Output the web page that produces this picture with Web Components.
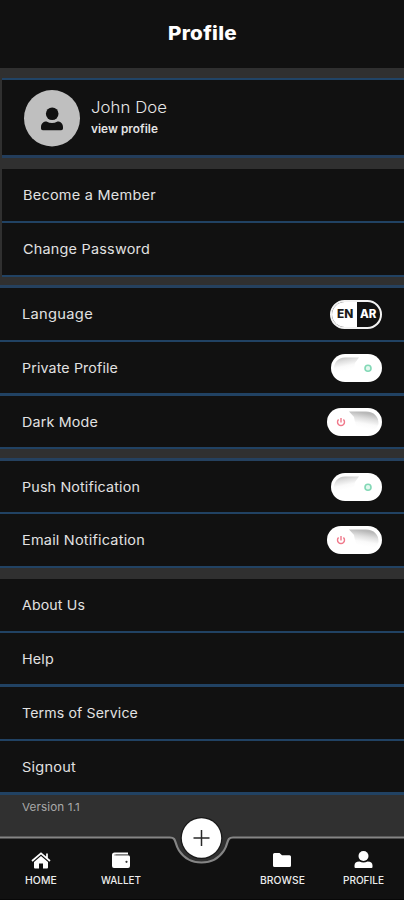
<!DOCTYPE html>
<html lang="en"><head><meta charset="utf-8"><title>Profile</title>
<style>html,body{margin:0;background:#303030}</style></head>
<body>
<profile-screen></profile-screen>
<script>
const define = (name, html, ready) => customElements.define(name, class extends HTMLElement {
  connectedCallback() {
    if (this.shadowRoot) return;
    this.attachShadow({ mode: 'open' }).innerHTML = html(this);
    if (ready) ready(this);
  }
});

// Text whose glyphs are widened so that its line has the width given in "w".
define('fit-text', () => `<style>:host{display:block;white-space:nowrap}span{display:inline-block;transform-origin:0 50%}</style><span><slot></slot></span>`, el => {
  const s = el.shadowRoot.querySelector('span');
  const n = el.textContent.length;
  const w = +el.getAttribute('w');
  const natural = s.getBoundingClientRect().width;
  const spacing = (w - natural) / n * 0.25;
  s.style.letterSpacing = spacing + 'px';
  s.style.transform = `scaleX(${w / (natural + spacing * n)})`;
  el.style.width = w + 'px';
});

define('app-header', () => `<style>
:host{display:flex;height:68px;box-sizing:border-box;align-items:center;justify-content:center;background:#111;color:#fff;font-size:19px;font-weight:800;line-height:24px;padding-left:1px}
</style><slot></slot>`);

define('user-card', () => `<style>
:host{display:flex;box-sizing:border-box;height:80px;margin:10px 0 0 2px;border-top:2px solid #214466;border-bottom:3px solid #233d5b;background:#111;padding:10px 0 0 22px;gap:11px}
svg{display:block;flex:none}
div{padding-top:6px}
.n{font-size:16.5px;line-height:22px;font-weight:300;color:#e6e6e6}
.v{font-size:11.5px;line-height:16px;font-weight:600;color:#e4e4e4;margin-top:3px}
</style><svg width="56" height="57" viewBox="0 0 56 57"><ellipse cx="28" cy="28.3" rx="28" ry="28.2" fill="#bfbfbf"/><circle cx="28.200" cy="23.700" r="6.300" fill="#111"/><path d="M17 38.500V37C17 33.500 19.500 31.500 22.500 31.500Q28 34.500 33.500 31.500C36.500 31.500 39 33.500 39 37V38.500Q39 40.300 37.200 40.300H18.800Q17 40.300 17 38.500Z" fill="#111"/></svg>
<div><fit-text class="n" w="76">John Doe</fit-text><fit-text class="v" w="67">view profile</fit-text></div>`);

define('row-group', () => `<style>:host{display:block;box-sizing:border-box;background:#111;margin-left:var(--inset,0)}</style><slot></slot>`);

define('list-row', el => `<style>
:host{display:flex;box-sizing:content-box;align-items:center;justify-content:space-between;padding:0 22px 0 var(--x,22px);border-bottom:2px solid #214263;color:#e2e2e2;font-size:13.3px;line-height:20px}
</style><fit-text w="${el.getAttribute('w')}">${el.getAttribute('label')}</fit-text><slot></slot>`);

define('language-switch', () => `<style>
:host{display:flex;box-sizing:border-box;width:52px;height:29px;border:2px solid #f2f2f2;border-radius:15px;overflow:hidden;font-size:11.5px;font-weight:800;line-height:25px;background:#111;color:#fff}
b{font-weight:800;background:#fff;color:#1b1b1b;padding-left:5px;width:20px}
i{font-style:normal;padding-left:3px}
</style><b><fit-text w="16.500">EN</fit-text></b><i><fit-text w="16.500">AR</fit-text></i>`);

define('power-toggle', el => el.hasAttribute('on') ? `<style>:host,svg{display:block}</style>
<svg width="51" height="28" viewBox="0 0 51 28"><defs><linearGradient id="g" x1="0" y1="0" x2="0.25" y2="1"><stop stop-color="#b8b8b8"/><stop offset=".25" stop-color="#dedede"/><stop offset=".5" stop-color="#fafafa"/><stop offset=".7" stop-color="#fff"/></linearGradient></defs><rect width="51" height="28" rx="14" fill="#fff"/><path d="M3 17C2 9 7 3.500 14 3.500H28L24 9Q22 24 13 24Q4 24 3 17Z" fill="url(#g)"/><circle cx="37" cy="14.300" r="3" fill="#e3f8ef" stroke="#83d8b6" stroke-width="1.600"/></svg>`
: `<style>:host,svg{display:block}</style>
<svg width="55" height="28" viewBox="0 0 55 28"><defs><linearGradient id="g" x1="0.250" y1="0" x2="0" y2="1"><stop stop-color="#b8b8b8"/><stop offset=".25" stop-color="#dedede"/><stop offset=".5" stop-color="#fafafa"/><stop offset=".7" stop-color="#fff"/></linearGradient></defs><rect width="55" height="28" rx="14" fill="#fff"/><path d="M22 3.500H39C47 3.500 52 9 51.500 16Q49 24 40 24Q29 24 27 9Z" fill="url(#g)"/><path d="M11.600 11.500A3.500 3.500 0 1 0 16.400 11.500M14 10V14.500" fill="none" stroke="#f0788a" stroke-width="1.400"/></svg>`);

define('nav-item', () => `<style>
:host{display:flex;flex-direction:column;align-items:center;color:#ededed;font-size:10px;font-weight:500;line-height:12px;gap:4px}
</style><slot name="icon"></slot><slot></slot>`);

define('tab-bar', () => `<style>
:host{display:block;position:relative;height:81px}
.bg{display:block;position:absolute;inset:0;overflow:visible}
nav{position:relative;display:grid;grid-template-columns:82px 78px 82px 80px 82px;padding-top:31px}
svg{display:block}
</style>
<svg class="bg" width="404" height="81" viewBox="0 0 404 81"><path d="M-3 18.500H170C177 18.500 174 24 179 31.500C184.500 40 193 43.500 201.500 43.500C210 43.500 218.500 40 224 31.500C229 24 226 18.500 233 18.500H408V90H-3Z" fill="#111" stroke="#858585" stroke-width="2.200"/><circle cx="201.500" cy="19" r="21" fill="#181818"/><circle cx="201.500" cy="19" r="19.700" fill="#fff"/><path d="M193.500 19H209.500M201.500 11V27" stroke="#292929" stroke-width="1.500"/><path d="M0 80.500H404" stroke="#080808"/></svg>
<nav>
<nav-item><svg slot="icon" width="20" height="20" viewBox="0 0 20 20" fill="#fff"><path d="M10 6L17 12V17.500Q17 18.500 16 18.500H12V13.500H8V18.500H4Q3 18.500 3 17.500V12Z"/><path d="M1 11L10 3.300L19 11M16 3.500V8" fill="none" stroke="#fff" stroke-width="1.700"/></svg><fit-text w="32">HOME</fit-text></nav-item>
<nav-item><svg slot="icon" width="20" height="20" viewBox="0 0 20 20"><path d="M3.500 2.500H17V4.500H4.500V5.200H17Q19 5.200 19 7V16Q19 18 17 18H3Q1 18 1 16V5Q1 2.500 3.500 2.500Z" fill="#fff"/><path d="M3 5H17.500" stroke="#777" stroke-width=".7"/><circle cx="15.500" cy="11.800" r="1.100" fill="#333"/></svg><fit-text w="40">WALLET</fit-text></nav-item>
<nav-item style="grid-column:4"><svg slot="icon" width="20" height="20" viewBox="0 0 20 20"><path d="M2.500 3H7.500L10 5.200H17.500Q19 5.200 19 6.800V15.500Q19 17 17.500 17H2.500Q1 17 1 15.500V4.500Q1 3 2.500 3Z" fill="#fff"/></svg><fit-text w="45">BROWSE</fit-text></nav-item>
<nav-item><svg slot="icon" width="20" height="20" viewBox="0 0 20 20" fill="#fff"><circle cx="10.500" cy="6" r="5"/><path d="M1.500 17V15.500Q1.500 11.500 6.500 11.500Q10.500 13.500 14.500 11.500Q19.500 11.500 19.500 15.500V17Q19.500 18 18.500 18H2.500Q1.500 18 1.500 17Z"/></svg><fit-text w="41">PROFILE</fit-text></nav-item>
</nav>`);

define('profile-screen', () => `<style>
:host{display:flex;flex-direction:column;width:404px;height:900px;overflow:hidden;background:#303030;font-family:Inter,"Open Sans",sans-serif}
.ver{height:24px;padding:4px 0 0 22px;box-sizing:border-box;color:#a9a9a9;font-size:11px;line-height:16px;font-weight:400}
</style>
<app-header><fit-text w="69">Profile</fit-text></app-header>
<user-card></user-card>
<row-group style="--inset:2px;--x:21px;margin-top:11px">
<list-row w="133" label="Become a Member" style="height:52px"></list-row>
<list-row w="127" label="Change Password" style="height:52px"></list-row></row-group>
<row-group style="margin-top:8px;border-top:3px solid #25415f">
<list-row w="71" label="Language" style="height:52px"><language-switch></language-switch></list-row>
<list-row w="96" label="Private Profile" style="height:51px;border-bottom-width:3px"><power-toggle on></power-toggle></list-row>
<list-row w="76" label="Dark Mode" style="height:51px"><power-toggle></power-toggle></list-row></row-group>
<row-group style="margin-top:9px;border-top:3px solid #25415f">
<list-row w="118" label="Push Notification" style="height:51px"><power-toggle on></power-toggle></list-row>
<list-row w="123" label="Email Notification" style="height:52px"><power-toggle></power-toggle></list-row></row-group>
<row-group style="margin-top:11px">
<list-row w="63" label="About Us" style="height:52px"></list-row>
<list-row w="32" label="Help" style="height:51px;border-bottom-width:3px"></list-row>
<list-row w="116" label="Terms of Service" style="height:52px"></list-row>
<list-row w="54" label="Signout" style="height:51px;border-bottom-width:3px"></list-row></row-group>
<div class="ver"><fit-text w="58">Version 1.1</fit-text></div>
<tab-bar></tab-bar>`);
</script>
</body></html>
